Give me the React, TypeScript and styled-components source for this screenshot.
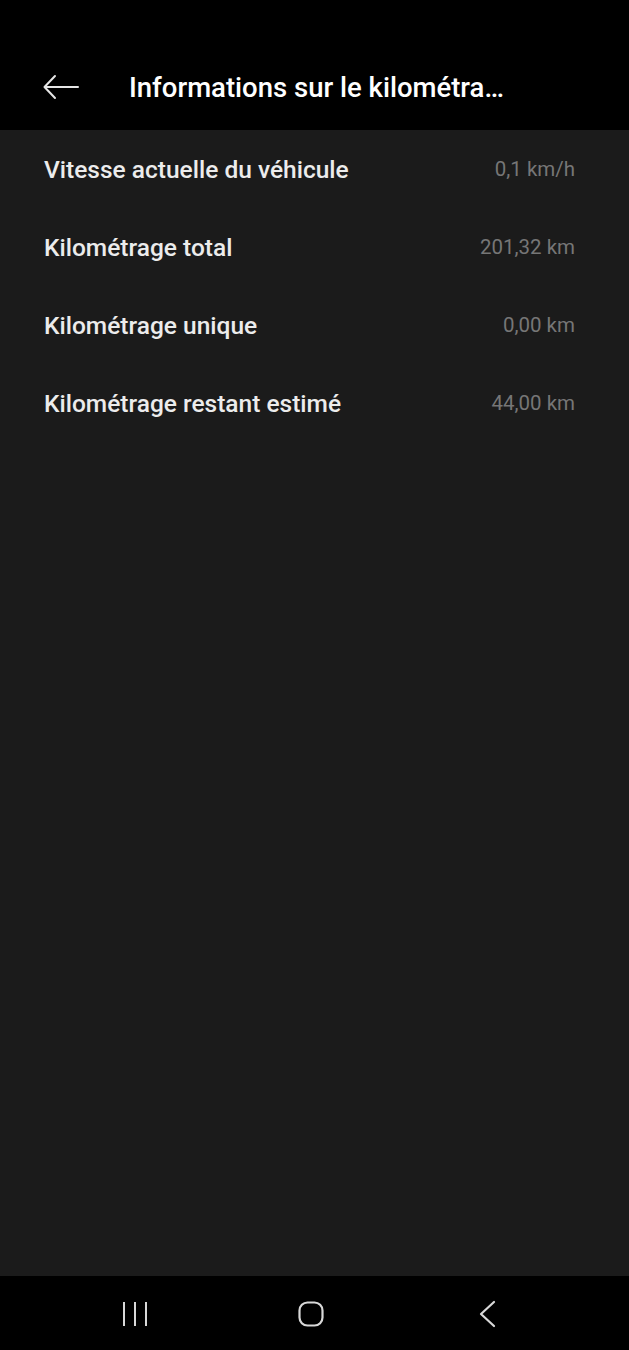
import React from "react";
import styled, { createGlobalStyle } from "styled-components";

interface MileageRow {
	label: string,
	value: string,
}

const rows: MileageRow[] = [
	{ label: "Vitesse actuelle du véhicule", value: "0,1 km/h" },
	{ label: "Kilométrage total", value: "201,32 km" },
	{ label: "Kilométrage unique", value: "0,00 km" },
	{ label: "Kilométrage restant estimé", value: "44,00 km" },
];

const GlobalStyle = createGlobalStyle`
	html, body {
		margin: 0;
		padding: 0;
		background: #000;
	}
	body {
		font-family: Roboto, "Liberation Sans", sans-serif;
	}
`;

const Screen = styled.div`
	display: flex;
	flex-direction: column;
	width: 629px;
	height: 1350px;
	background: #000;
	overflow: hidden;
`;

const Header = styled.header`
	display: flex;
	align-items: center;
	height: 86px;
	padding-top: 44px;
	box-sizing: content-box;
	background: #000;
`;

const BackButton = styled.button`
	display: flex;
	align-items: center;
	justify-content: center;
	width: 36px;
	height: 36px;
	margin-left: 43px;
	padding: 0;
	border: none;
	background: none;
`;

const Title = styled.h1`
	margin: 0 0 0 50px;
	max-width: 378px;
	font-size: 27.5px;
	font-weight: 500;
	color: #fff;
	white-space: nowrap;
	overflow: hidden;
	text-overflow: ellipsis;
`;

const Content = styled.main`
	flex: 1;
	background: #1b1b1b;
`;

const Row = styled.div`
	display: flex;
	align-items: center;
	justify-content: space-between;
	height: 78px;
	padding: 0 54px 0 44px;
`;

const Label = styled.span`
	font-size: 24.5px;
	font-weight: 500;
	color: #ececec;
`;

const Value = styled.span`
	font-size: 20.5px;
	color: #767676;
`;

const NavBar = styled.nav`
	display: flex;
	align-items: center;
	gap: 146px;
	height: 74px;
	padding-left: 120px;
	background: #000;
`;

const NavIcon = styled.svg`
	width: 30px;
	height: 30px;
`;

export default function App() {
	return (
		<Screen>
			<GlobalStyle />
			<Header>
				<BackButton>
					<svg width="36" height="26" viewBox="0 0 36 26" fill="none" stroke="#e6e6e6" strokeWidth="2" strokeLinecap="round" strokeLinejoin="round">
						<path d="M35 13H2" />
						<path d="M12 2L1.5 13L12 24" />
					</svg>
				</BackButton>
				<Title>Informations sur le kilométrage</Title>
			</Header>
			<Content>
				{rows.map((row) => (
					<Row key={row.label}>
						<Label>{row.label}</Label>
						<Value>{row.value}</Value>
					</Row>
				))}
			</Content>
			<NavBar>
				<NavIcon viewBox="0 0 30 30" fill="none" stroke="#d8d8d8" strokeWidth="2">
					<path d="M4 4v24M15 4v24M26 4v24" />
				</NavIcon>
				<NavIcon viewBox="0 0 30 30" fill="none" stroke="#d8d8d8" strokeWidth="2.2">
					<rect x="3.5" y="4.5" width="23" height="23" rx="8" />
				</NavIcon>
				<NavIcon viewBox="0 0 30 30" fill="none" stroke="#d8d8d8" strokeWidth="2.2" strokeLinecap="round" strokeLinejoin="round">
					<path d="M22 4L9 16L22 28" />
				</NavIcon>
			</NavBar>
		</Screen>
	);
}
